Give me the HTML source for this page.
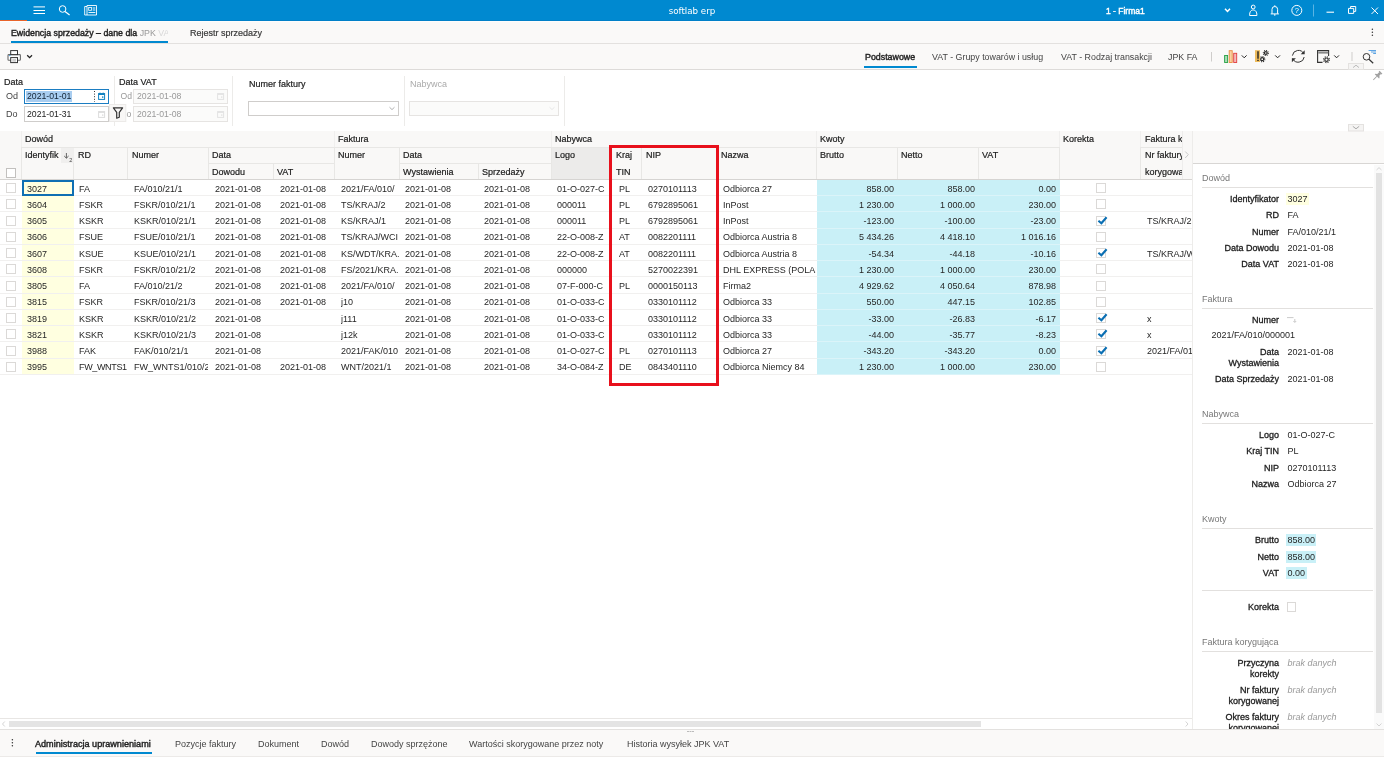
<!DOCTYPE html>
<html lang="pl"><head><meta charset="utf-8"><title>softlab erp</title>
<style>
*{box-sizing:border-box;margin:0;padding:0}
html,body{width:1384px;height:757px;overflow:hidden;background:#fff}
body{font-variant-ligatures:none;font-family:"Liberation Sans",Arial,sans-serif;font-size:9px;color:#222;position:relative;line-height:1}
.a{position:absolute}
.t{position:absolute;white-space:nowrap;line-height:12px;height:12px}
.b{-webkit-text-stroke:0.4px currentColor}
#title{left:0;top:0;width:1384px;height:21px;background:#0089d0}
#tabs{left:0;top:21px;width:1384px;height:23px;background:#faf9f8;border-bottom:1px solid #e3e1df}
#tool{left:0;top:44px;width:1384px;height:26px;background:#faf9f8;border-bottom:1px solid #dddbd9}
#filter{left:0;top:70px;width:1384px;height:61px;background:#fff}
.inp{position:absolute;height:15px;border:1px solid #cfcdcb;background:#fff}
.inp.dis{background:#fbfbfa;border-color:#e6e4e2}
.vsep{position:absolute;width:1px;background:#ecebe9}
#grid{left:0;top:131px;width:1192px;height:586px;background:#fff;overflow:hidden}
.hd{position:absolute;background:#f9f8f7}
.hl{position:absolute;background:#e8e7e5}
.cell{position:absolute;overflow:hidden;white-space:nowrap;line-height:12px;height:16px;padding-top:3px;color:#262626}
.num{text-align:right}
.rline{position:absolute;left:0;width:1192px;height:1px;background:#f1f0ef}
.cb{position:absolute;width:10px;height:10px;border:1px solid #dbd9d7;background:#fff}
.lab{position:absolute;white-space:nowrap;text-align:right;color:#1c1c1c;line-height:11px;-webkit-text-stroke:0.3px #1c1c1c}
.val{position:absolute;white-space:nowrap;color:#262626;line-height:11px}
.sec{position:absolute;white-space:nowrap;color:#777;line-height:11px}
.sline{position:absolute;left:1202px;width:171px;height:1px;background:#e2e0de}
</style></head><body>
<div id="root" style="position:absolute;left:0;top:0;width:1384px;height:757px;will-change:transform">

<div class="a" id="title"></div>
<div class="a" style="left:0;top:20px;width:1384px;height:1px;background:#0080c8"></div>
<div class="a" style="left:0;top:20px;width:27px;height:1px;background:#e8642a"></div>
<div class="t" style="left:662px;top:5px;color:#fff;font-family:'DejaVu Sans','Liberation Sans',sans-serif;font-size:8.7px;width:60px;text-align:center">softlab erp</div>
<div class="t b" style="left:1106px;top:5px;color:#fff;font-size:8.5px">1 - Firma1</div>
<div class="a" id="tabs"></div>
<div class="a" style="left:0;top:21px;width:1384px;height:1px;background:#fdfdfd"></div>
<div class="t b" style="left:11px;top:27px;font-size:8.8px;color:#222;width:157px;overflow:hidden">Ewidencja sprzedaży – dane dla <span style="font-weight:normal;color:#999;-webkit-text-stroke:0">JPK</span><span style="font-weight:normal;color:#d8d8d8;-webkit-text-stroke:0"> VAT</span></div>
<div class="a" style="left:11px;top:41px;width:157px;height:2px;background:#0089d0"></div>
<div class="t" style="left:190px;top:27px;font-size:9px;color:#3a3a3a;-webkit-text-stroke:0.2px #3a3a3a">Rejestr sprzedaży</div>
<div class="a" id="tool"></div>
<div class="t b" style="left:865px;top:51px;font-size:8.85px;color:#222">Podstawowe</div>
<div class="t" style="left:932px;top:51px;font-size:8.85px;color:#444">VAT - Grupy towarów i usług</div>
<div class="t" style="left:1061px;top:51px;font-size:8.85px;color:#444">VAT - Rodzaj transakcji</div>
<div class="t" style="left:1168px;top:51px;font-size:8.85px;color:#444">JPK FA</div>
<div class="a" style="left:864px;top:66px;width:53px;height:2px;background:#0089d0"></div>
<div class="a" id="filter"></div>
<div class="t" style="left:4px;top:76px;font-size:9px;-webkit-text-stroke:0.2px #222">Data</div>
<div class="t" style="left:6px;top:90px;font-size:9px;color:#444">Od</div>
<div class="t" style="left:6px;top:108px;font-size:9px;color:#444">Do</div>
<div class="inp" style="left:24px;top:89px;width:85px;border-color:#1b7dc2"></div>
<div class="a" style="left:26px;top:91px;width:46px;height:11px;background:#a8cdf0"></div>
<div class="t" style="left:27px;top:90px;font-size:8.7px;color:#123">2021-01-01</div>
<div class="inp" style="left:24px;top:106px;width:85px;height:16px"></div>
<div class="t" style="left:27px;top:108px;font-size:8.7px">2021-01-31</div>
<div class="vsep" style="left:114px;top:76px;height:50px"></div>
<div class="t" style="left:119px;top:76px;font-size:9px;-webkit-text-stroke:0.2px #222">Data VAT</div>
<div class="t" style="left:120.5px;top:90px;font-size:8.6px;color:#999">Od</div>
<div class="t" style="left:126.5px;top:108px;font-size:8.6px;color:#999">o</div>
<div class="inp dis" style="left:133px;top:89px;width:95px"></div>
<div class="t" style="left:137px;top:90px;font-size:8.7px;color:#999">2021-01-08</div>
<div class="inp dis" style="left:133px;top:106px;width:95px;height:16px"></div>
<div class="t" style="left:137px;top:108px;font-size:8.7px;color:#999">2021-01-08</div>
<div class="vsep" style="left:232px;top:76px;height:50px"></div>
<div class="t" style="left:249px;top:78px;font-size:9px;-webkit-text-stroke:0.2px #222">Numer faktury</div>
<div class="inp" style="left:248px;top:101px;width:151px"></div>
<div class="vsep" style="left:404px;top:76px;height:50px"></div>
<div class="t" style="left:410px;top:78px;font-size:9px;color:#aaa">Nabywca</div>
<div class="inp dis" style="left:409px;top:101px;width:150px"></div>
<div class="vsep" style="left:564px;top:76px;height:50px"></div>
<div class="a" id="grid"></div>
<div class="hd" style="left:0;top:131px;width:1192px;height:49px"></div>
<div class="a" style="left:0;top:179px;width:1192px;height:1px;background:#d6d4d2"></div>
<div class="t" style="left:25px;top:133px;font-size:9px;color:#1c1c1c;-webkit-text-stroke:0.2px #1c1c1c">Dowód</div>
<div class="t" style="left:338px;top:133px;font-size:9px;color:#1c1c1c;-webkit-text-stroke:0.2px #1c1c1c">Faktura</div>
<div class="t" style="left:555px;top:133px;font-size:9px;color:#1c1c1c;-webkit-text-stroke:0.2px #1c1c1c">Nabywca</div>
<div class="t" style="left:820px;top:133px;font-size:9px;color:#1c1c1c;-webkit-text-stroke:0.2px #1c1c1c">Kwoty</div>
<div class="t" style="left:1063px;top:133px;font-size:9px;color:#1c1c1c;-webkit-text-stroke:0.2px #1c1c1c">Korekta</div>
<div class="t" style="left:1145px;top:133px;font-size:9px;color:#1c1c1c;-webkit-text-stroke:0.2px #1c1c1c">Faktura k</div>
<div class="t" style="left:25px;top:149px;font-size:9px;color:#1c1c1c;-webkit-text-stroke:0.2px #1c1c1c">Identyfik</div>
<div class="t" style="left:78px;top:149px;font-size:9px;color:#1c1c1c;-webkit-text-stroke:0.2px #1c1c1c">RD</div>
<div class="t" style="left:132px;top:149px;font-size:9px;color:#1c1c1c;-webkit-text-stroke:0.2px #1c1c1c">Numer</div>
<div class="t" style="left:212px;top:149px;font-size:9px;color:#1c1c1c;-webkit-text-stroke:0.2px #1c1c1c">Data</div>
<div class="t" style="left:338px;top:149px;font-size:9px;color:#1c1c1c;-webkit-text-stroke:0.2px #1c1c1c">Numer</div>
<div class="t" style="left:403px;top:149px;font-size:9px;color:#1c1c1c;-webkit-text-stroke:0.2px #1c1c1c">Data</div>
<div class="t" style="left:555px;top:149px;font-size:9px;color:#1c1c1c;-webkit-text-stroke:0.2px #1c1c1c">Logo</div>
<div class="t" style="left:616px;top:149px;font-size:9px;color:#1c1c1c;-webkit-text-stroke:0.2px #1c1c1c">Kraj</div>
<div class="t" style="left:646px;top:149px;font-size:9px;color:#1c1c1c;-webkit-text-stroke:0.2px #1c1c1c">NIP</div>
<div class="t" style="left:721px;top:149px;font-size:9px;color:#1c1c1c;-webkit-text-stroke:0.2px #1c1c1c">Nazwa</div>
<div class="t" style="left:820px;top:149px;font-size:9px;color:#1c1c1c;-webkit-text-stroke:0.2px #1c1c1c">Brutto</div>
<div class="t" style="left:901px;top:149px;font-size:9px;color:#1c1c1c;-webkit-text-stroke:0.2px #1c1c1c">Netto</div>
<div class="t" style="left:982px;top:149px;font-size:9px;color:#1c1c1c;-webkit-text-stroke:0.2px #1c1c1c">VAT</div>
<div class="t" style="left:1145px;top:149px;font-size:9px;color:#1c1c1c;-webkit-text-stroke:0.2px #1c1c1c">Nr faktury</div>
<div class="t" style="left:212px;top:166px;font-size:9px;color:#1c1c1c;-webkit-text-stroke:0.2px #1c1c1c">Dowodu</div>
<div class="t" style="left:277px;top:166px;font-size:9px;color:#1c1c1c;-webkit-text-stroke:0.2px #1c1c1c">VAT</div>
<div class="t" style="left:403px;top:166px;font-size:9px;color:#1c1c1c;-webkit-text-stroke:0.2px #1c1c1c">Wystawienia</div>
<div class="t" style="left:482px;top:166px;font-size:9px;color:#1c1c1c;-webkit-text-stroke:0.2px #1c1c1c">Sprzedaży</div>
<div class="t" style="left:616px;top:166px;font-size:9px;color:#1c1c1c;-webkit-text-stroke:0.2px #1c1c1c">TIN</div>
<div class="t" style="left:1145px;top:166px;font-size:9px;color:#1c1c1c;-webkit-text-stroke:0.2px #1c1c1c">korygowa</div>
<div class="hl" style="left:22px;top:147px;width:1038px;height:1px"></div>
<div class="hl" style="left:1141px;top:147px;width:41px;height:1px"></div>
<div class="hl" style="left:209px;top:163px;width:125px;height:1px"></div>
<div class="hl" style="left:400px;top:163px;width:151px;height:1px"></div>
<div class="hl" style="left:21px;top:131px;width:1px;height:16px;background:#f0efee"></div>
<div class="hl" style="left:21px;top:147px;width:1px;height:32px"></div>
<div class="hl" style="left:334px;top:131px;width:1px;height:16px;background:#f0efee"></div>
<div class="hl" style="left:334px;top:147px;width:1px;height:32px"></div>
<div class="hl" style="left:551px;top:131px;width:1px;height:16px;background:#f0efee"></div>
<div class="hl" style="left:551px;top:147px;width:1px;height:32px"></div>
<div class="hl" style="left:816px;top:131px;width:1px;height:16px;background:#f0efee"></div>
<div class="hl" style="left:816px;top:147px;width:1px;height:32px"></div>
<div class="hl" style="left:1059px;top:131px;width:1px;height:16px;background:#f0efee"></div>
<div class="hl" style="left:1059px;top:147px;width:1px;height:32px"></div>
<div class="hl" style="left:1140px;top:131px;width:1px;height:16px;background:#f0efee"></div>
<div class="hl" style="left:1140px;top:147px;width:1px;height:32px"></div>
<div class="hl" style="left:73px;top:148px;width:1px;height:31px"></div>
<div class="hl" style="left:127px;top:148px;width:1px;height:31px"></div>
<div class="hl" style="left:208px;top:148px;width:1px;height:31px"></div>
<div class="hl" style="left:399px;top:148px;width:1px;height:31px"></div>
<div class="hl" style="left:641px;top:148px;width:1px;height:31px"></div>
<div class="hl" style="left:717px;top:148px;width:1px;height:31px"></div>
<div class="hl" style="left:897px;top:148px;width:1px;height:31px"></div>
<div class="hl" style="left:978px;top:148px;width:1px;height:31px"></div>
<div class="hl" style="left:273px;top:164px;width:1px;height:15px"></div>
<div class="hl" style="left:478px;top:164px;width:1px;height:15px"></div>
<div class="a" style="left:552px;top:148px;width:58px;height:31px;background:#ecebea"></div>
<div class="t" style="left:555px;top:149px;font-size:9px;color:#1c1c1c;-webkit-text-stroke:0.2px #1c1c1c">Logo</div>
<div class="a" style="left:61px;top:148px;width:13px;height:15px;background:#f0efee"></div>
<div class="a" style="left:1182px;top:131px;width:11px;height:48px;background:#f9f8f7;border-left:1px solid #eeedec"></div>
<div class="a" style="left:1192px;top:131px;width:1px;height:599px;background:#edecea"></div>
<div class="a" style="left:22px;top:180px;width:52px;height:15px;background:#ffffe0"></div>
<div class="a" style="left:817px;top:180px;width:243px;height:15px;background:#c9f0f7"></div>
<div class="rline" style="top:195px"></div>
<div class="a" style="left:817px;top:195px;width:243px;height:1px;background:#dbf4f9"></div>
<div class="cb" style="left:6px;top:183px"></div>
<div class="cell" style="left:27px;top:180px;width:46px">3027</div>
<div class="cell" style="left:79px;top:180px;width:48px">FA</div>
<div class="cell" style="left:134px;top:180px;width:74px">FA/010/21/1</div>
<div class="cell" style="left:215px;top:180px;width:58px">2021-01-08</div>
<div class="cell" style="left:280px;top:180px;width:54px">2021-01-08</div>
<div class="cell" style="left:341px;top:180px;width:58px">2021/FA/010/</div>
<div class="cell" style="left:405px;top:180px;width:73px">2021-01-08</div>
<div class="cell" style="left:484px;top:180px;width:67px">2021-01-08</div>
<div class="cell" style="left:557px;top:180px;width:54px">01-O-027-C</div>
<div class="cell" style="left:619px;top:180px;width:22px">PL</div>
<div class="cell" style="left:648px;top:180px;width:69px">0270101113</div>
<div class="cell" style="left:723px;top:180px;width:93px">Odbiorca 27</div>
<div class="cell num" style="left:817px;top:180px;width:77px">858.00</div>
<div class="cell num" style="left:898px;top:180px;width:77px">858.00</div>
<div class="cell num" style="left:979px;top:180px;width:77px">0.00</div>
<div class="cb" style="left:1096px;top:183px"></div>
<div class="a" style="left:22px;top:196px;width:52px;height:15px;background:#ffffe0"></div>
<div class="a" style="left:817px;top:196px;width:243px;height:15px;background:#c9f0f7"></div>
<div class="rline" style="top:211px"></div>
<div class="a" style="left:817px;top:211px;width:243px;height:1px;background:#dbf4f9"></div>
<div class="cb" style="left:6px;top:199px"></div>
<div class="cell" style="left:27px;top:196px;width:46px">3604</div>
<div class="cell" style="left:79px;top:196px;width:48px">FSKR</div>
<div class="cell" style="left:134px;top:196px;width:74px">FSKR/010/21/1</div>
<div class="cell" style="left:215px;top:196px;width:58px">2021-01-08</div>
<div class="cell" style="left:280px;top:196px;width:54px">2021-01-08</div>
<div class="cell" style="left:341px;top:196px;width:58px">TS/KRAJ/2</div>
<div class="cell" style="left:405px;top:196px;width:73px">2021-01-08</div>
<div class="cell" style="left:484px;top:196px;width:67px">2021-01-08</div>
<div class="cell" style="left:557px;top:196px;width:54px">000011</div>
<div class="cell" style="left:619px;top:196px;width:22px">PL</div>
<div class="cell" style="left:648px;top:196px;width:69px">6792895061</div>
<div class="cell" style="left:723px;top:196px;width:93px">InPost</div>
<div class="cell num" style="left:817px;top:196px;width:77px">1 230.00</div>
<div class="cell num" style="left:898px;top:196px;width:77px">1 000.00</div>
<div class="cell num" style="left:979px;top:196px;width:77px">230.00</div>
<div class="cb" style="left:1096px;top:199px"></div>
<div class="a" style="left:22px;top:212px;width:52px;height:16px;background:#ffffe0"></div>
<div class="a" style="left:817px;top:212px;width:243px;height:16px;background:#c9f0f7"></div>
<div class="rline" style="top:228px"></div>
<div class="a" style="left:817px;top:228px;width:243px;height:1px;background:#dbf4f9"></div>
<div class="cb" style="left:6px;top:216px"></div>
<div class="cell" style="left:27px;top:212px;width:46px">3605</div>
<div class="cell" style="left:79px;top:212px;width:48px">KSKR</div>
<div class="cell" style="left:134px;top:212px;width:74px">KSKR/010/21/1</div>
<div class="cell" style="left:215px;top:212px;width:58px">2021-01-08</div>
<div class="cell" style="left:280px;top:212px;width:54px">2021-01-08</div>
<div class="cell" style="left:341px;top:212px;width:58px">KS/KRAJ/1</div>
<div class="cell" style="left:405px;top:212px;width:73px">2021-01-08</div>
<div class="cell" style="left:484px;top:212px;width:67px">2021-01-08</div>
<div class="cell" style="left:557px;top:212px;width:54px">000011</div>
<div class="cell" style="left:619px;top:212px;width:22px">PL</div>
<div class="cell" style="left:648px;top:212px;width:69px">6792895061</div>
<div class="cell" style="left:723px;top:212px;width:93px">InPost</div>
<div class="cell num" style="left:817px;top:212px;width:77px">-123.00</div>
<div class="cell num" style="left:898px;top:212px;width:77px">-100.00</div>
<div class="cell num" style="left:979px;top:212px;width:77px">-23.00</div>
<div class="cb" style="left:1096px;top:216px"></div>
<svg class="a" style="left:1095.5px;top:215px" width="13" height="11" viewBox="0 0 13 11"><path d="M2.4 5.8 L5.4 8.3 L10.6 2.2" fill="none" stroke="#0b6fb3" stroke-width="2.1"/></svg>
<div class="cell" style="left:1147px;top:212px;width:45px">TS/KRAJ/2</div>
<div class="a" style="left:22px;top:229px;width:52px;height:15px;background:#ffffe0"></div>
<div class="a" style="left:817px;top:229px;width:243px;height:15px;background:#c9f0f7"></div>
<div class="rline" style="top:244px"></div>
<div class="a" style="left:817px;top:244px;width:243px;height:1px;background:#dbf4f9"></div>
<div class="cb" style="left:6px;top:232px"></div>
<div class="cell" style="left:27px;top:228px;width:46px">3606</div>
<div class="cell" style="left:79px;top:228px;width:48px">FSUE</div>
<div class="cell" style="left:134px;top:228px;width:74px">FSUE/010/21/1</div>
<div class="cell" style="left:215px;top:228px;width:58px">2021-01-08</div>
<div class="cell" style="left:280px;top:228px;width:54px">2021-01-08</div>
<div class="cell" style="left:341px;top:228px;width:58px">TS/KRAJ/WCI</div>
<div class="cell" style="left:405px;top:228px;width:73px">2021-01-08</div>
<div class="cell" style="left:484px;top:228px;width:67px">2021-01-08</div>
<div class="cell" style="left:557px;top:228px;width:54px">22-O-008-Z</div>
<div class="cell" style="left:619px;top:228px;width:22px">AT</div>
<div class="cell" style="left:648px;top:228px;width:69px">0082201111</div>
<div class="cell" style="left:723px;top:228px;width:93px">Odbiorca Austria 8</div>
<div class="cell num" style="left:817px;top:228px;width:77px">5 434.26</div>
<div class="cell num" style="left:898px;top:228px;width:77px">4 418.10</div>
<div class="cell num" style="left:979px;top:228px;width:77px">1 016.16</div>
<div class="cb" style="left:1096px;top:232px"></div>
<div class="a" style="left:22px;top:245px;width:52px;height:15px;background:#ffffe0"></div>
<div class="a" style="left:817px;top:245px;width:243px;height:15px;background:#c9f0f7"></div>
<div class="rline" style="top:260px"></div>
<div class="a" style="left:817px;top:260px;width:243px;height:1px;background:#dbf4f9"></div>
<div class="cb" style="left:6px;top:248px"></div>
<div class="cell" style="left:27px;top:245px;width:46px">3607</div>
<div class="cell" style="left:79px;top:245px;width:48px">KSUE</div>
<div class="cell" style="left:134px;top:245px;width:74px">KSUE/010/21/1</div>
<div class="cell" style="left:215px;top:245px;width:58px">2021-01-08</div>
<div class="cell" style="left:280px;top:245px;width:54px">2021-01-08</div>
<div class="cell" style="left:341px;top:245px;width:58px">KS/WDT/KRA.</div>
<div class="cell" style="left:405px;top:245px;width:73px">2021-01-08</div>
<div class="cell" style="left:484px;top:245px;width:67px">2021-01-08</div>
<div class="cell" style="left:557px;top:245px;width:54px">22-O-008-Z</div>
<div class="cell" style="left:619px;top:245px;width:22px">AT</div>
<div class="cell" style="left:648px;top:245px;width:69px">0082201111</div>
<div class="cell" style="left:723px;top:245px;width:93px">Odbiorca Austria 8</div>
<div class="cell num" style="left:817px;top:245px;width:77px">-54.34</div>
<div class="cell num" style="left:898px;top:245px;width:77px">-44.18</div>
<div class="cell num" style="left:979px;top:245px;width:77px">-10.16</div>
<div class="cb" style="left:1096px;top:248px"></div>
<svg class="a" style="left:1095.5px;top:247px" width="13" height="11" viewBox="0 0 13 11"><path d="M2.4 5.8 L5.4 8.3 L10.6 2.2" fill="none" stroke="#0b6fb3" stroke-width="2.1"/></svg>
<div class="cell" style="left:1147px;top:245px;width:45px">TS/KRAJ/W</div>
<div class="a" style="left:22px;top:261px;width:52px;height:15px;background:#ffffe0"></div>
<div class="a" style="left:817px;top:261px;width:243px;height:15px;background:#c9f0f7"></div>
<div class="rline" style="top:276px"></div>
<div class="a" style="left:817px;top:276px;width:243px;height:1px;background:#dbf4f9"></div>
<div class="cb" style="left:6px;top:264px"></div>
<div class="cell" style="left:27px;top:261px;width:46px">3608</div>
<div class="cell" style="left:79px;top:261px;width:48px">FSKR</div>
<div class="cell" style="left:134px;top:261px;width:74px">FSKR/010/21/2</div>
<div class="cell" style="left:215px;top:261px;width:58px">2021-01-08</div>
<div class="cell" style="left:280px;top:261px;width:54px">2021-01-08</div>
<div class="cell" style="left:341px;top:261px;width:58px">FS/2021/KRA.</div>
<div class="cell" style="left:405px;top:261px;width:73px">2021-01-08</div>
<div class="cell" style="left:484px;top:261px;width:67px">2021-01-08</div>
<div class="cell" style="left:557px;top:261px;width:54px">000000</div>
<div class="cell" style="left:648px;top:261px;width:69px">5270022391</div>
<div class="cell" style="left:723px;top:261px;width:93px">DHL EXPRESS (POLAND)</div>
<div class="cell num" style="left:817px;top:261px;width:77px">1 230.00</div>
<div class="cell num" style="left:898px;top:261px;width:77px">1 000.00</div>
<div class="cell num" style="left:979px;top:261px;width:77px">230.00</div>
<div class="cb" style="left:1096px;top:264px"></div>
<div class="a" style="left:22px;top:277px;width:52px;height:16px;background:#ffffe0"></div>
<div class="a" style="left:817px;top:277px;width:243px;height:16px;background:#c9f0f7"></div>
<div class="rline" style="top:293px"></div>
<div class="a" style="left:817px;top:293px;width:243px;height:1px;background:#dbf4f9"></div>
<div class="cb" style="left:6px;top:281px"></div>
<div class="cell" style="left:27px;top:277px;width:46px">3805</div>
<div class="cell" style="left:79px;top:277px;width:48px">FA</div>
<div class="cell" style="left:134px;top:277px;width:74px">FA/010/21/2</div>
<div class="cell" style="left:215px;top:277px;width:58px">2021-01-08</div>
<div class="cell" style="left:280px;top:277px;width:54px">2021-01-08</div>
<div class="cell" style="left:341px;top:277px;width:58px">2021/FA/010/</div>
<div class="cell" style="left:405px;top:277px;width:73px">2021-01-08</div>
<div class="cell" style="left:484px;top:277px;width:67px">2021-01-08</div>
<div class="cell" style="left:557px;top:277px;width:54px">07-F-000-C</div>
<div class="cell" style="left:619px;top:277px;width:22px">PL</div>
<div class="cell" style="left:648px;top:277px;width:69px">0000150113</div>
<div class="cell" style="left:723px;top:277px;width:93px">Firma2</div>
<div class="cell num" style="left:817px;top:277px;width:77px">4 929.62</div>
<div class="cell num" style="left:898px;top:277px;width:77px">4 050.64</div>
<div class="cell num" style="left:979px;top:277px;width:77px">878.98</div>
<div class="cb" style="left:1096px;top:281px"></div>
<div class="a" style="left:22px;top:294px;width:52px;height:15px;background:#ffffe0"></div>
<div class="a" style="left:817px;top:294px;width:243px;height:15px;background:#c9f0f7"></div>
<div class="rline" style="top:309px"></div>
<div class="a" style="left:817px;top:309px;width:243px;height:1px;background:#dbf4f9"></div>
<div class="cb" style="left:6px;top:297px"></div>
<div class="cell" style="left:27px;top:293px;width:46px">3815</div>
<div class="cell" style="left:79px;top:293px;width:48px">FSKR</div>
<div class="cell" style="left:134px;top:293px;width:74px">FSKR/010/21/3</div>
<div class="cell" style="left:215px;top:293px;width:58px">2021-01-08</div>
<div class="cell" style="left:280px;top:293px;width:54px">2021-01-08</div>
<div class="cell" style="left:341px;top:293px;width:58px">j10</div>
<div class="cell" style="left:405px;top:293px;width:73px">2021-01-08</div>
<div class="cell" style="left:484px;top:293px;width:67px">2021-01-08</div>
<div class="cell" style="left:557px;top:293px;width:54px">01-O-033-C</div>
<div class="cell" style="left:648px;top:293px;width:69px">0330101112</div>
<div class="cell" style="left:723px;top:293px;width:93px">Odbiorca 33</div>
<div class="cell num" style="left:817px;top:293px;width:77px">550.00</div>
<div class="cell num" style="left:898px;top:293px;width:77px">447.15</div>
<div class="cell num" style="left:979px;top:293px;width:77px">102.85</div>
<div class="cb" style="left:1096px;top:297px"></div>
<div class="a" style="left:22px;top:310px;width:52px;height:15px;background:#ffffe0"></div>
<div class="a" style="left:817px;top:310px;width:243px;height:15px;background:#c9f0f7"></div>
<div class="rline" style="top:325px"></div>
<div class="a" style="left:817px;top:325px;width:243px;height:1px;background:#dbf4f9"></div>
<div class="cb" style="left:6px;top:313px"></div>
<div class="cell" style="left:27px;top:310px;width:46px">3819</div>
<div class="cell" style="left:79px;top:310px;width:48px">KSKR</div>
<div class="cell" style="left:134px;top:310px;width:74px">KSKR/010/21/2</div>
<div class="cell" style="left:215px;top:310px;width:58px">2021-01-08</div>
<div class="cell" style="left:341px;top:310px;width:58px">j111</div>
<div class="cell" style="left:405px;top:310px;width:73px">2021-01-08</div>
<div class="cell" style="left:484px;top:310px;width:67px">2021-01-08</div>
<div class="cell" style="left:557px;top:310px;width:54px">01-O-033-C</div>
<div class="cell" style="left:648px;top:310px;width:69px">0330101112</div>
<div class="cell" style="left:723px;top:310px;width:93px">Odbiorca 33</div>
<div class="cell num" style="left:817px;top:310px;width:77px">-33.00</div>
<div class="cell num" style="left:898px;top:310px;width:77px">-26.83</div>
<div class="cell num" style="left:979px;top:310px;width:77px">-6.17</div>
<div class="cb" style="left:1096px;top:313px"></div>
<svg class="a" style="left:1095.5px;top:312px" width="13" height="11" viewBox="0 0 13 11"><path d="M2.4 5.8 L5.4 8.3 L10.6 2.2" fill="none" stroke="#0b6fb3" stroke-width="2.1"/></svg>
<div class="cell" style="left:1147px;top:310px;width:45px">x</div>
<div class="a" style="left:22px;top:326px;width:52px;height:15px;background:#ffffe0"></div>
<div class="a" style="left:817px;top:326px;width:243px;height:15px;background:#c9f0f7"></div>
<div class="rline" style="top:341px"></div>
<div class="a" style="left:817px;top:341px;width:243px;height:1px;background:#dbf4f9"></div>
<div class="cb" style="left:6px;top:329px"></div>
<div class="cell" style="left:27px;top:326px;width:46px">3821</div>
<div class="cell" style="left:79px;top:326px;width:48px">KSKR</div>
<div class="cell" style="left:134px;top:326px;width:74px">KSKR/010/21/3</div>
<div class="cell" style="left:215px;top:326px;width:58px">2021-01-08</div>
<div class="cell" style="left:341px;top:326px;width:58px">j12k</div>
<div class="cell" style="left:405px;top:326px;width:73px">2021-01-08</div>
<div class="cell" style="left:484px;top:326px;width:67px">2021-01-08</div>
<div class="cell" style="left:557px;top:326px;width:54px">01-O-033-C</div>
<div class="cell" style="left:648px;top:326px;width:69px">0330101112</div>
<div class="cell" style="left:723px;top:326px;width:93px">Odbiorca 33</div>
<div class="cell num" style="left:817px;top:326px;width:77px">-44.00</div>
<div class="cell num" style="left:898px;top:326px;width:77px">-35.77</div>
<div class="cell num" style="left:979px;top:326px;width:77px">-8.23</div>
<div class="cb" style="left:1096px;top:329px"></div>
<svg class="a" style="left:1095.5px;top:328px" width="13" height="11" viewBox="0 0 13 11"><path d="M2.4 5.8 L5.4 8.3 L10.6 2.2" fill="none" stroke="#0b6fb3" stroke-width="2.1"/></svg>
<div class="cell" style="left:1147px;top:326px;width:45px">x</div>
<div class="a" style="left:22px;top:342px;width:52px;height:16px;background:#ffffe0"></div>
<div class="a" style="left:817px;top:342px;width:243px;height:16px;background:#c9f0f7"></div>
<div class="rline" style="top:358px"></div>
<div class="a" style="left:817px;top:358px;width:243px;height:1px;background:#dbf4f9"></div>
<div class="cb" style="left:6px;top:346px"></div>
<div class="cell" style="left:27px;top:342px;width:46px">3988</div>
<div class="cell" style="left:79px;top:342px;width:48px">FAK</div>
<div class="cell" style="left:134px;top:342px;width:74px">FAK/010/21/1</div>
<div class="cell" style="left:215px;top:342px;width:58px">2021-01-08</div>
<div class="cell" style="left:341px;top:342px;width:58px">2021/FAK/010</div>
<div class="cell" style="left:405px;top:342px;width:73px">2021-01-08</div>
<div class="cell" style="left:484px;top:342px;width:67px">2021-01-08</div>
<div class="cell" style="left:557px;top:342px;width:54px">01-O-027-C</div>
<div class="cell" style="left:619px;top:342px;width:22px">PL</div>
<div class="cell" style="left:648px;top:342px;width:69px">0270101113</div>
<div class="cell" style="left:723px;top:342px;width:93px">Odbiorca 27</div>
<div class="cell num" style="left:817px;top:342px;width:77px">-343.20</div>
<div class="cell num" style="left:898px;top:342px;width:77px">-343.20</div>
<div class="cell num" style="left:979px;top:342px;width:77px">0.00</div>
<div class="cb" style="left:1096px;top:346px"></div>
<svg class="a" style="left:1095.5px;top:345px" width="13" height="11" viewBox="0 0 13 11"><path d="M2.4 5.8 L5.4 8.3 L10.6 2.2" fill="none" stroke="#0b6fb3" stroke-width="2.1"/></svg>
<div class="cell" style="left:1147px;top:342px;width:45px">2021/FA/01</div>
<div class="a" style="left:22px;top:359px;width:52px;height:15px;background:#ffffe0"></div>
<div class="a" style="left:817px;top:359px;width:243px;height:15px;background:#c9f0f7"></div>
<div class="rline" style="top:374px"></div>
<div class="a" style="left:817px;top:374px;width:243px;height:1px;background:#dbf4f9"></div>
<div class="cb" style="left:6px;top:362px"></div>
<div class="cell" style="left:27px;top:358px;width:46px">3995</div>
<div class="cell" style="left:79px;top:358px;width:48px;letter-spacing:-0.35px">FW_WNTS1</div>
<div class="cell" style="left:134px;top:358px;width:74px">FW_WNTS1/010/2</div>
<div class="cell" style="left:215px;top:358px;width:58px">2021-01-08</div>
<div class="cell" style="left:280px;top:358px;width:54px">2021-01-08</div>
<div class="cell" style="left:341px;top:358px;width:58px">WNT/2021/1</div>
<div class="cell" style="left:405px;top:358px;width:73px">2021-01-08</div>
<div class="cell" style="left:484px;top:358px;width:67px">2021-01-08</div>
<div class="cell" style="left:557px;top:358px;width:54px">34-O-084-Z</div>
<div class="cell" style="left:619px;top:358px;width:22px">DE</div>
<div class="cell" style="left:648px;top:358px;width:69px">0843401110</div>
<div class="cell" style="left:723px;top:358px;width:93px">Odbiorca Niemcy 84</div>
<div class="cell num" style="left:817px;top:358px;width:77px">1 230.00</div>
<div class="cell num" style="left:898px;top:358px;width:77px">1 000.00</div>
<div class="cell num" style="left:979px;top:358px;width:77px">230.00</div>
<div class="cb" style="left:1096px;top:362px"></div>
<div class="a" style="left:22px;top:180px;width:52px;height:16px;border:2px solid #0f6fb3"></div>
<div class="cb" style="left:6px;top:168px;border-color:#c2c0be"></div>
<div class="a" style="left:609px;top:145px;width:110px;height:241px;border:3px solid #e8101c"></div>
<div class="a" style="left:1192px;top:131px;width:192px;height:33px;background:#faf9f8;border-bottom:1px solid #d8d6d4"></div>
<div class="a" style="left:1193px;top:165px;width:191px;height:565px;background:#fff"></div>
<div class="a" style="left:1192px;top:131px;width:1px;height:598px;background:#edecea"></div>
<div class="sec" style="left:1202px;top:173px">Dowód</div>
<div class="sline" style="top:187px"></div>
<div class="lab" style="left:1190px;width:89px;top:194px">Identyfikator</div>
<div class="a" style="left:1286px;top:193px;width:23px;height:12px;background:#ffffe0"></div>
<div class="val" style="left:1287.5px;top:194px;color:#262626;">3027</div>
<div class="lab" style="left:1190px;width:89px;top:210px">RD</div>
<div class="val" style="left:1287.5px;top:210px;color:#262626;">FA</div>
<div class="lab" style="left:1190px;width:89px;top:227px">Numer</div>
<div class="val" style="left:1287.5px;top:227px;color:#262626;">FA/010/21/1</div>
<div class="lab" style="left:1190px;width:89px;top:243px">Data Dowodu</div>
<div class="val" style="left:1287.5px;top:243px;color:#262626;">2021-01-08</div>
<div class="lab" style="left:1190px;width:89px;top:259px">Data VAT</div>
<div class="val" style="left:1287.5px;top:259px;color:#262626;">2021-01-08</div>
<div class="sec" style="left:1202px;top:294px">Faktura</div>
<div class="sline" style="top:308px"></div>
<div class="lab" style="left:1190px;width:89px;top:315px">Numer</div>
<div class="val" style="left:1211.5px;top:330px">2021/FA/010/000001</div>
<div class="lab" style="left:1190px;width:89px;top:347px">Data<br>Wystawienia</div>
<div class="val" style="left:1287.5px;top:347px;color:#262626;">2021-01-08</div>
<div class="lab" style="left:1190px;width:89px;top:374px">Data Sprzedaży</div>
<div class="val" style="left:1287.5px;top:374px;color:#262626;">2021-01-08</div>
<div class="sec" style="left:1202px;top:409px">Nabywca</div>
<div class="sline" style="top:423px"></div>
<div class="lab" style="left:1190px;width:89px;top:430px">Logo</div>
<div class="val" style="left:1287.5px;top:430px;color:#262626;">01-O-027-C</div>
<div class="lab" style="left:1190px;width:89px;top:446px">Kraj TIN</div>
<div class="val" style="left:1287.5px;top:446px;color:#262626;">PL</div>
<div class="lab" style="left:1190px;width:89px;top:463px">NIP</div>
<div class="val" style="left:1287.5px;top:463px;color:#262626;">0270101113</div>
<div class="lab" style="left:1190px;width:89px;top:479px">Nazwa</div>
<div class="val" style="left:1287.5px;top:479px;color:#262626;">Odbiorca 27</div>
<div class="sec" style="left:1202px;top:514px">Kwoty</div>
<div class="sline" style="top:528px"></div>
<div class="lab" style="left:1190px;width:89px;top:535px">Brutto</div>
<div class="a" style="left:1286px;top:534px;width:30px;height:12px;background:#c9f0f7"></div>
<div class="val" style="left:1287.5px;top:535px;color:#262626;">858.00</div>
<div class="lab" style="left:1190px;width:89px;top:552px">Netto</div>
<div class="a" style="left:1286px;top:551px;width:30px;height:12px;background:#c9f0f7"></div>
<div class="val" style="left:1287.5px;top:552px;color:#262626;">858.00</div>
<div class="lab" style="left:1190px;width:89px;top:568px">VAT</div>
<div class="a" style="left:1286px;top:567px;width:21px;height:12px;background:#c9f0f7"></div>
<div class="val" style="left:1287.5px;top:568px;color:#262626;">0.00</div>
<div class="sline" style="top:590px"></div>
<div class="lab" style="left:1190px;width:89px;top:602px">Korekta</div>
<div class="cb" style="left:1287px;top:602px;width:9px;height:10px"></div>
<div class="sec" style="left:1202px;top:637px">Faktura korygująca</div>
<div class="sline" style="top:651px"></div>
<div class="lab" style="left:1190px;width:89px;top:658px">Przyczyna<br>korekty</div>
<div class="val" style="left:1287.5px;top:658px;color:#999;font-style:italic;">brak danych</div>
<div class="lab" style="left:1190px;width:89px;top:685px">Nr faktury<br>korygowanej</div>
<div class="val" style="left:1287.5px;top:685px;color:#999;font-style:italic;">brak danych</div>
<div class="lab" style="left:1190px;width:89px;top:712px">Okres faktury<br>korygowanej</div>
<div class="val" style="left:1287.5px;top:712px;color:#999;font-style:italic;">brak danych</div>
<div class="a" style="left:1374px;top:165px;width:10px;height:565px;background:#fafafa"></div>
<div class="a" style="left:1376px;top:173px;width:6px;height:540px;background:#e2e2e2"></div>
<div class="a" style="left:0;top:718px;width:1192px;height:12px;background:#fff;border-top:1px solid #e8e6e4"></div>
<div class="a" style="left:9px;top:721px;width:972px;height:6px;background:#e4e4e4"></div>
<div class="a" style="left:0;top:729px;width:1384px;height:28px;background:#faf9f8;border-top:1px solid #e3e1df"></div>
<div class="a" style="left:0;top:756px;width:1384px;height:1px;background:#eceae8"></div>
<div class="t b" style="left:35px;top:738px;font-size:9.1px;color:#222">Administracja uprawnieniami</div>
<div class="t" style="left:175px;top:738px;font-size:9px;color:#444">Pozycje faktury</div>
<div class="t" style="left:258px;top:738px;font-size:9px;color:#444">Dokument</div>
<div class="t" style="left:321px;top:738px;font-size:9px;color:#444">Dowód</div>
<div class="t" style="left:371px;top:738px;font-size:9px;color:#444">Dowody sprzężone</div>
<div class="t" style="left:469px;top:738px;font-size:9px;color:#444">Wartości skorygowane przez noty</div>
<div class="t" style="left:627px;top:738px;font-size:9px;color:#444">Historia wysyłek JPK VAT</div>
<div class="a" style="left:36px;top:752px;width:116px;height:2px;background:#0089d0"></div>
<svg class="a" style="left:0;top:0;pointer-events:none" width="1384" height="757" viewBox="0 0 1384 757" fill="none" stroke-linecap="butt">
<g stroke="#fff" stroke-width="1">
 <path d="M33.5 6.9H45M33.5 10.5H45M33.5 13.5H45"/>
 <circle cx="62.6" cy="9" r="3.3"/><path d="M65 11.5L69.6 15" stroke-width="1.2"/>
 <path d="M87 5.5H96.5V15H87ZM87 6.5H84.7V15H87" stroke-width="0.9"/>
 <rect x="88.7" y="7.5" width="2.8" height="2.8" stroke-width="0.8"/>
 <path d="M92.7 8H95.3M92.7 10H95.3M88.5 12.5H95.3" stroke-width="0.9"/>
 <path d="M1225 8.8L1227.5 11.4L1230 8.8" stroke-width="1.5"/>
 <circle cx="1253.2" cy="7" r="1.9"/>
 <path d="M1249.6 15.5C1249.6 11.5 1251 10 1253.2 10C1255.4 10 1256.9 11.5 1256.9 15.5Z"/>
 <path d="M1272 13.8V9.3A2.8 2.8 0 0 1 1277.6 9.3V13.8M1270.7 13.9H1278.9M1274.8 14V15.8M1274.8 6.5V5.3"/>
 <circle cx="1296.8" cy="10.4" r="5"/>
 <path d="M1326.5 12.2H1334" stroke-width="1.1"/>
 <path d="M1348.5 8.4H1353.7V13.4H1348.5ZM1350.6 8.3V6.5H1355.7V11.4H1353.8"/>
 <path d="M1371.5 7.5L1378 14M1378 7.5L1371.5 14"/>
</g>
<path d="M1313.5 4.5V16.5" stroke="#5ab4e3" stroke-width="1"/>
<!-- print -->
<g stroke-width="1">
 <rect x="8" y="54.6" width="12.4" height="5.6" rx="0.8" stroke="#6a6a6a" stroke-width="1.1" fill="#fff"/>
 <rect x="10.7" y="50.6" width="6.8" height="4" stroke="#333" fill="#fff"/>
 <rect x="10.7" y="57.6" width="6.8" height="5" stroke="#333" fill="#fff"/>
 <path d="M12.3 59.8H16M12.3 61H16" stroke="#aaa" stroke-width="0.8"/>
 <path d="M9 55.6H10.6" stroke="#3a9be0" stroke-width="0.9"/>
 <path d="M27.2 55.2L29.6 57.6L32 55.2" stroke="#222" stroke-width="1.3"/>
</g>
<!-- toolbar right -->
<path d="M1211.5 52V61.5M1352 52V61" stroke="#cfcdcb" stroke-width="1"/>
<rect x="1224.6" y="55.5" width="3" height="7" fill="#a8dcb4" stroke="#27a046" stroke-width="0.9"/>
<rect x="1229.2" y="50.7" width="3" height="11.8" fill="#f9d2a3" stroke="#ea8a3c" stroke-width="0.9"/>
<rect x="1233.7" y="53.3" width="3" height="9.2" fill="#f5b9b9" stroke="#e03c3c" stroke-width="0.9"/>
<g stroke="#222" stroke-width="1">
 <path d="M1241.8 55.4L1244.2 57.8L1246.6 55.4"/>
 <path d="M1275.2 55.4L1277.6 57.8L1280 55.4"/>
 <path d="M1334.2 55.4L1336.6 57.8L1339 55.4"/>
</g>
<g stroke="#2a2a2a">
 <circle cx="1262.2" cy="59.2" r="1.5" stroke-width="1.2"/>
 <circle cx="1262.2" cy="59.2" r="2.6" stroke-width="1.1" stroke-dasharray="1.02 1.02"/>
 <circle cx="1265.8" cy="53" r="1.4" stroke-width="1.2"/>
 <circle cx="1265.8" cy="53" r="2.5" stroke-width="1.1" stroke-dasharray="0.98 0.98"/>
</g>
<rect x="1255" y="50.2" width="5" height="11.8" fill="#edbb5c"/>
<path d="M1258 51.2V58.8M1258 59.8V61" stroke="#222" stroke-width="1.4"/>
<g stroke="#333" stroke-width="1">
 <path d="M1292.4 55.6A6 6 0 0 1 1303.8 53.9M1304.2 57A6 6 0 0 1 1292.800 58.700"/>
 <path d="M1304.7 50.300V54.300H1300.700Z" fill="#333" stroke="none"/><path d="M1291.9 62.300V58.300H1295.900Z" fill="#333" stroke="none"/>
</g>
<g stroke="#333" stroke-width="1.1">
 <path d="M1322.500 62.400H1317.600V50.600H1328.600V56"/>
 <rect x="1318.200" y="51.800" width="10" height="1.800" fill="#8a8a8a" stroke="none"/>
 <circle cx="1326.500" cy="59.700" r="1.700" fill="#fff" stroke-width="1.200"/>
 <circle cx="1326.500" cy="59.700" r="2.900" stroke-width="1.100" stroke-dasharray="1.140 1.140"/>
</g>
<circle cx="1366.5" cy="56.8" r="3.3" stroke="#333" stroke-width="1"/>
<path d="M1369 59.3L1373.2 63.2" stroke="#333" stroke-width="1.2"/>
<path d="M1368.6 50.5H1376M1371 52H1376M1373.2 53.5H1376" stroke="#4a98e0" stroke-width="0.9"/>
<!-- collapse tabs -->
<rect x="1348.5" y="63.5" width="15" height="6" fill="#f5f4f3" stroke="#e4e2e0" stroke-width="1"/>
<path d="M1353 67.6L1356 65.2L1359 67.6" stroke="#bbb" stroke-width="1"/>
<rect x="1348.5" y="124.5" width="15" height="6.5" fill="#f5f4f3" stroke="#e4e2e0" stroke-width="1"/>
<path d="M1352.8 126.3L1356 128.8L1359.2 126.3" stroke="#aaa" stroke-width="1"/>
<!-- pin -->
<g transform="translate(1377.3 75.9) rotate(45)" fill="#a0a0a0" stroke="none">
 <rect x="-2" y="-5.2" width="4" height="1.2"/><rect x="-1.3" y="-4.2" width="2.6" height="3.6"/><path d="M-3 -0.2L-1.6 -1.2H1.6L3 -0.2V0.6H-3Z"/><rect x="-0.4" y="0.6" width="0.8" height="5"/>
</g>
<!-- filter icons -->
<path d="M94.5 91V102" stroke="#333" stroke-width="1" stroke-dasharray="1 1.6"/>
<g stroke="#1080c0" stroke-width="1"><rect x="98.6" y="93.6" width="6" height="5.8"/><path d="M98.6 94.2H104.6" stroke-width="1.6"/><path d="M100 92.6V94M103.2 92.6V94"/><rect x="102" y="96.4" width="1.4" height="1.4" fill="#1080c0" stroke="none"/></g>
<g stroke="#dcdcdc" stroke-width="1"><rect x="98.6" y="111.6" width="6" height="5.8"/><path d="M98.6 112.2H104.6" stroke-width="1.4"/><rect x="102" y="114.4" width="1.4" height="1.4" fill="#dcdcdc" stroke="none"/></g>
<g stroke="#e3e3e3" stroke-width="1"><rect x="217.6" y="93.6" width="6" height="5.8"/><path d="M217.6 94.2H223.6" stroke-width="1.4"/><rect x="221" y="96.4" width="1.4" height="1.4" fill="#e3e3e3" stroke="none"/></g>
<g stroke="#e3e3e3" stroke-width="1"><rect x="217.6" y="111.6" width="6" height="5.8"/><path d="M217.6 112.2H223.6" stroke-width="1.4"/><rect x="221" y="114.4" width="1.4" height="1.4" fill="#e3e3e3" stroke="none"/></g>
<rect x="109.5" y="104.5" width="16.3" height="17" fill="#f8f7f6" stroke="#eceae8" stroke-width="1"/>
<path d="M113.4 107.8H122.6L119.3 112.3V117.2L116.7 118.2V112.3Z" stroke="#333" stroke-width="1.2" stroke-linejoin="round"/>
<path d="M389.5 107.2L392 109.6L394.5 107.2" stroke="#b0b0b0" stroke-width="1"/>
<path d="M549.5 107.2L552 109.6L554.5 107.2" stroke="#e6e6e6" stroke-width="1"/>
<!-- sort indicator -->
<path d="M66.4 153V158M64.2 156L66.4 158.2L68.6 156" stroke="#555" stroke-width="0.9"/>
<path d="M1185.2 151.5L1188.3 154.7L1185.2 158" stroke="#c8c8c8" stroke-width="1"/>
<!-- details numer icon -->
<path d="M1287 317.6H1293.5M1294.8 319V322M1293.4 321L1294.8 322.5L1296.2 321" stroke="#c4c4c4" stroke-width="0.9"/>
<!-- scroll arrows -->
<g stroke="#d4d4d4" stroke-width="1">
 <path d="M1376.5 170L1379 167.6L1381.500 170"/>
 <path d="M1376.500 723.500L1379 726L1381.500 723.500"/>
 <path d="M4.800 721.500L2.500 724L4.800 726.500"/>
 <path d="M1185.700 721.500L1188 724L1185.700 726.500"/>
</g>
<path d="M687 731.500H694" stroke="#bbb" stroke-width="1" stroke-dasharray="2 0.5"/>
<g fill="#333"><circle cx="12.400" cy="739.800" r="0.750"/><circle cx="12.400" cy="742.800" r="0.750"/><circle cx="12.400" cy="745.800" r="0.750"/>
<circle cx="1372.400" cy="29.200" r="0.750"/><circle cx="1372.400" cy="32.200" r="0.750"/><circle cx="1372.400" cy="35.200" r="0.750"/></g>
<text x="1294.800" y="13.100" font-family="Liberation Sans, sans-serif" font-size="7.500" fill="#fff" stroke="none">?</text>
<text x="69.200" y="161.800" font-family="Liberation Sans, sans-serif" font-size="5.500" fill="#444" stroke="none">2</text>
</svg>
</div></body></html>
